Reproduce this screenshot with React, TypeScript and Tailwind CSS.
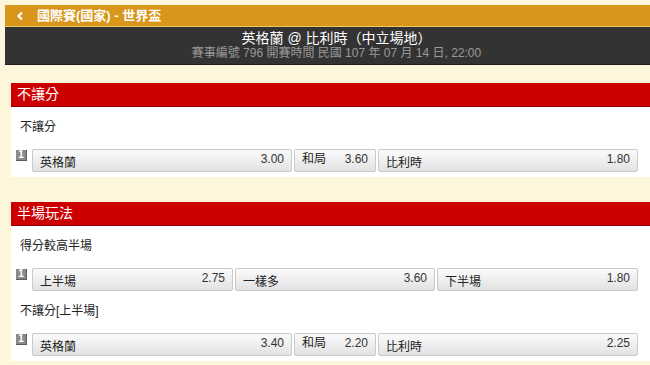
import React from 'react';

type Odd = { name: string; odds: string; narrow?: boolean };
type Market = { title: string; rows: Odd[]; cols: string };

const FONT = { fontFamily: '"Liberation Sans", "Noto Sans CJK TC", sans-serif' };

const SECTIONS: { title: string; markets: Market[] }[] = [
  {
    title: '不讓分',
    markets: [
      {
        title: '不讓分',
        cols: 'grid-cols-[260px_82px_1fr]',
        rows: [
          { name: '英格蘭', odds: '3.00' },
          { name: '和局', odds: '3.60', narrow: true },
          { name: '比利時', odds: '1.80' },
        ],
      },
    ],
  },
  {
    title: '半場玩法',
    markets: [
      {
        title: '得分較高半場',
        cols: 'grid-cols-[201px_200px_1fr]',
        rows: [
          { name: '上半場', odds: '2.75' },
          { name: '一樣多', odds: '3.60' },
          { name: '下半場', odds: '1.80' },
        ],
      },
      {
        title: '不讓分[上半場]',
        cols: 'grid-cols-[260px_82px_1fr]',
        rows: [
          { name: '英格蘭', odds: '3.40' },
          { name: '和局', odds: '2.20', narrow: true },
          { name: '比利時', odds: '2.25' },
        ],
      },
    ],
  },
];

function OddButton({ o }: { o: Odd }) {
  return (
    <div className="flex h-[23px] justify-between rounded-[2px] border border-[#c9c9c9] bg-gradient-to-b from-[#fbfbfb] to-[#e2e2e2] px-[7px] text-[12px] text-[#222]">
      <span className={o.narrow ? 'pt-[2px] leading-[14px]' : 'pt-[6px] leading-[14px]'}>{o.name}</span>
      <span className="pt-[2px] leading-[14px] text-[#333]">{o.odds}</span>
    </div>
  );
}

function MarketBlock({ m }: { m: Market }) {
  return (
    <div className="pt-[10px]">
      <div className="h-[20px] pl-[9px] text-[12px] leading-[20px] text-[#222]">{m.title}</div>
      <div className="mt-[12px] flex">
        <div className="w-[21px] shrink-0 pl-[5px] pt-[1px]">
          <div className="flex h-[11px] w-[11px] items-center justify-center border-b border-r border-[#5e5e5e] bg-[#8a8a8a] text-[10px] font-bold leading-none text-white">
            1
          </div>
        </div>
        <div className={`grid flex-1 gap-[2px] ${m.cols} pr-[12px]`}>
          {m.rows.map((o, i) => (
            <OddButton key={i} o={o} />
          ))}
        </div>
      </div>
    </div>
  );
}

export default function App() {
  return (
    <div className="min-h-[365px] w-[650px] bg-[#fdf6da] pl-[5px] pt-[5px]" style={FONT}>
      <div className="flex h-[22px] items-center border-b border-[#f0c66a] bg-[#d8961b] text-white">
        <svg width="8" height="10" viewBox="0 0 8 10" className="ml-[11px]">
          <path d="M6 1.5 L2.5 5 L6 8.5" fill="none" stroke="white" strokeWidth="2.2" />
        </svg>
        <span className="ml-[13px] text-[13px] font-bold">國際賽(國家) - 世界盃</span>
      </div>
      <div className="flex h-[38px] flex-col items-center justify-center border-b border-[#1f1f1f] bg-[#333333] pl-[18px]">
        <div className="text-[14px] leading-[16px] text-white">英格蘭 @ 比利時（中立場地）</div>
        <div className="text-[12px] leading-[15px] text-[#9a9a9a]">
          賽事編號 796 開賽時間 民國 107 年 07 月 14 日, 22:00
        </div>
      </div>
      <div className="flex flex-col gap-[25px] pl-[6px] pt-[18px]">
        {SECTIONS.map((s, i) => (
          <div key={i}>
            <div className="h-[24px] border-b border-[#8e0000] bg-[#cc0000] pl-[6px] text-[14px] leading-[23px] text-white">
              {s.title}
            </div>
            <div className="bg-white pb-[5px]">
              {s.markets.map((m, j) => (
                <MarketBlock key={j} m={m} />
              ))}
            </div>
          </div>
        ))}
      </div>
    </div>
  );
}
